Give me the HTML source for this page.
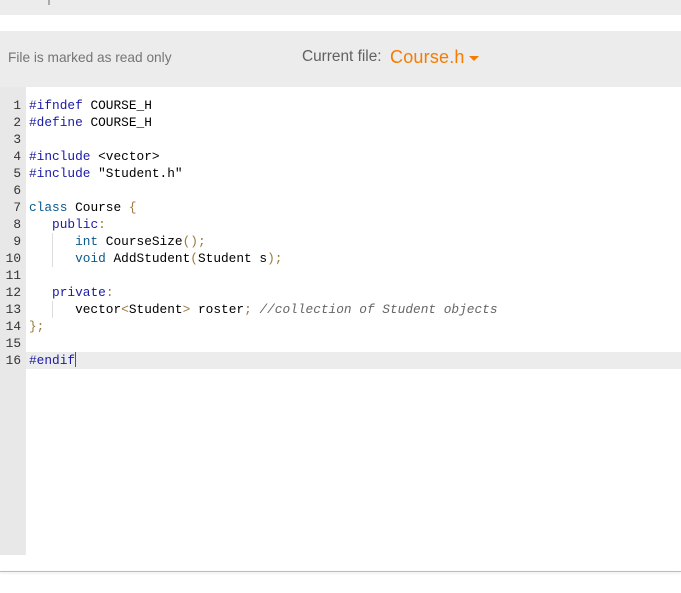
<!DOCTYPE html>
<html><head><meta charset="utf-8"><style>
body{margin:0;width:681px;height:593px;background:#fff;position:relative;overflow:hidden;font-family:"Liberation Sans",sans-serif}
.top{position:absolute;left:0;top:0;width:681px;height:15px;background:#ececec}
.tick{position:absolute;left:48px;top:0;width:2px;height:5px;background:#aaa}
.hdr{position:absolute;left:0;top:31px;width:681px;height:56px;background:#ececec}
.ro{position:absolute;left:8px;top:50px;font-size:13.7px;color:#757575}
.cf{position:absolute;left:302px;top:48px;font-size:15.4px;color:#616161}
.fn{position:absolute;left:390px;top:47px;font-size:18px;color:#f57c00;letter-spacing:0.2px}
.caret{position:absolute;left:469px;top:56px;width:0;height:0;border-left:5px solid transparent;border-right:5px solid transparent;border-top:5px solid #f57c00}
.gut{position:absolute;left:0;top:87px;width:26px;height:468px;background:#e8e8e8}
.code{position:absolute;left:0;top:97px;font-family:"Liberation Mono",monospace;font-size:12.8px;line-height:17px;white-space:pre;color:#000}
.ln{display:inline-block;width:21px;text-align:right;color:#333;margin-right:8px}
.hl{position:absolute;left:26px;top:352px;width:655px;height:17px;background:#ececec}
.k{color:#1a1aa6}.b{color:#997a3d}.c{color:#666;font-style:italic}.t{color:#0a5a8a}
.cur{display:inline-block;width:1px;height:15px;background:#555;vertical-align:-3px}
.guide{position:absolute;width:1px;background:#ddd}
.bot{position:absolute;left:0;top:571px;width:681px;height:1px;background:#bdbdbd;box-shadow:0 1px 2px #ddd}
</style></head><body>
<div class="top"><div class="tick"></div></div>
<div class="hdr"></div>
<div class="ro">File is marked as read only</div>
<div class="cf">Current file:</div>
<div class="fn">Course.h</div>
<div class="caret"></div>
<div class="gut"></div>
<div class="hl"></div>
<div class="guide" style="left:52px;top:233px;height:34px"></div>
<div class="guide" style="left:52px;top:301px;height:17px"></div>
<div class="code"><span class="ln">1</span><span class="k">#ifndef</span> COURSE_H
<span class="ln">2</span><span class="k">#define</span> COURSE_H
<span class="ln">3</span>
<span class="ln">4</span><span class="k">#include</span> &lt;vector&gt;
<span class="ln">5</span><span class="k">#include</span> "Student.h"
<span class="ln">6</span>
<span class="ln">7</span><span class="t">class</span> Course <span class="b">{</span>
<span class="ln">8</span>   <span class="k">public</span><span class="b">:</span>
<span class="ln">9</span>      <span class="t">int</span> CourseSize<span class="b">();</span>
<span class="ln">10</span>      <span class="t">void</span> AddStudent<span class="b">(</span>Student s<span class="b">);</span>
<span class="ln">11</span>
<span class="ln">12</span>   <span class="k">private</span><span class="b">:</span>
<span class="ln">13</span>      vector<span class="b">&lt;</span>Student<span class="b">&gt;</span> roster<span class="b">;</span> <span class="c">//collection of Student objects</span>
<span class="ln">14</span><span class="b">};</span>
<span class="ln">15</span>
<span class="ln">16</span><span class="k">#endif</span><span class="cur"></span></div>
<div class="bot"></div>
</body></html>
